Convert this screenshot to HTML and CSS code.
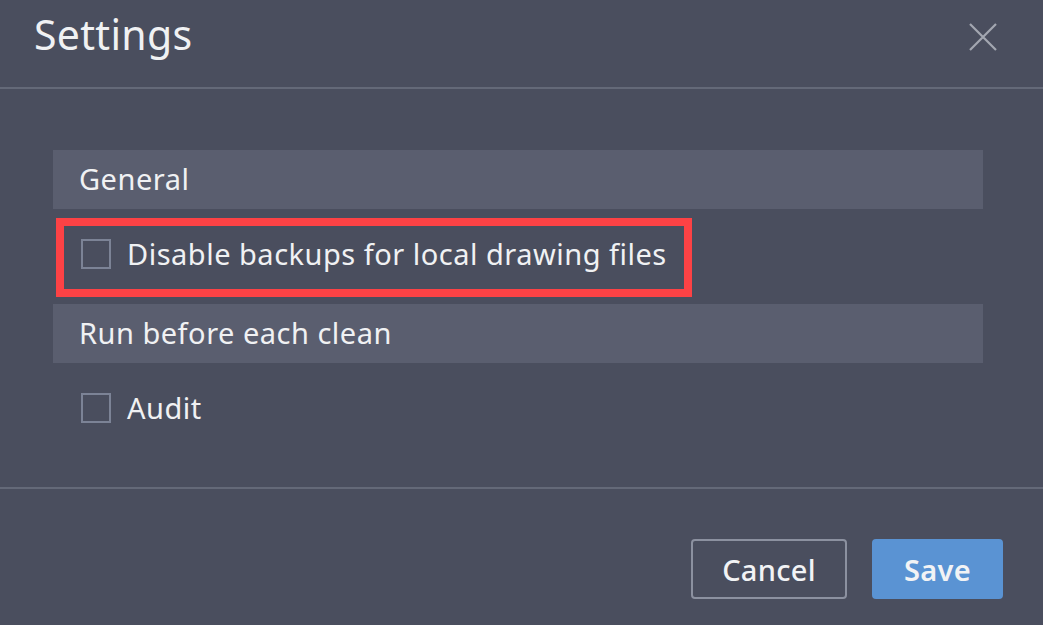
FILE: index.html
```html
<!DOCTYPE html>
<html lang="en">
<head>
<meta charset="utf-8">
<title>Settings</title>
<link rel="stylesheet" href="styles.css">
</head>
<body>
<div class="dialog">
  <header class="dialog-header">
    <h1 class="dialog-title">Settings</h1>
    <button class="close-btn" aria-label="Close">
      <svg width="28" height="28" viewBox="0 0 28 28"><path d="M1 1 L27 27 M27 1 L1 27" stroke="#a3a7b1" stroke-width="2.2" fill="none"/></svg>
    </button>
  </header>
  <main class="dialog-body">
    <div class="section-bar">General</div>
    <div class="option-row">
      <span class="checkbox"></span>
      <span class="option-label">Disable backups for local drawing files</span>
      <div class="highlight"></div>
    </div>
    <div class="section-bar">Run before each clean</div>
    <div class="option-row option-last">
      <span class="checkbox"></span>
      <span class="option-label">Audit</span>
    </div>
  </main>
  <footer class="dialog-footer">
    <button class="btn btn-cancel">Cancel</button>
    <button class="btn btn-save">Save</button>
  </footer>
</div>
</body>
</html>
```
FILE: styles.css
```css
html, body {
  margin: 0;
  padding: 0;
  background: #4a4e5e;
  font-family: "Noto Sans", "Open Sans", sans-serif;
  color: #f0f1f3;
}
.dialog {
  width: 1043px;
  height: 625px;
  overflow: hidden;
}
.dialog-header {
  height: 87px;
  display: flex;
  align-items: flex-start;
  justify-content: space-between;
  padding: 0 46px 0 34px;
  border-bottom: 2px solid #646978;
}
.dialog-title {
  margin: 0;
  margin-top: 10px;
  font-size: 41px;
  font-weight: 400;
  line-height: 48px;
  letter-spacing: 0.3px;
}
.close-btn {
  margin-top: 23px;
  background: none;
  border: none;
  padding: 0;
  width: 28px;
  height: 28px;
  cursor: pointer;
}
.close-btn svg { display: block; }
.dialog-body {
  padding: 61px 60px 0 53px;
  height: 337px;
  border-bottom: 2px solid #646978;
}
.section-bar {
  height: 59px;
  background: #5a5e6f;
  display: flex;
  align-items: center;
  padding-left: 26px;
  padding-bottom: 2px;
  box-sizing: border-box;
  font-size: 29px;
  letter-spacing: 0.5px;
}
.option-row {
  position: relative;
  display: flex;
  align-items: center;
  gap: 16px;
  padding: 30px 0 35px 28px;
  font-size: 29px;
  letter-spacing: 0.5px;
}
.checkbox {
  width: 26px;
  height: 26px;
  border: 2px solid #7c8396;
  flex: none;
}
.option-label {
  line-height: 30px;
}
.highlight {
  position: absolute;
  left: 3px;
  top: 9px;
  width: 636px;
  height: 79px;
  box-sizing: border-box;
  border: 8px solid #fd4245;
  pointer-events: none;
}
.dialog-footer {
  display: flex;
  justify-content: flex-end;
  gap: 25px;
  padding: 50px 40px 0 0;
}
.btn {
  height: 60px;
  font-family: "Noto Sans", "Open Sans", sans-serif;
  font-size: 29px;
  font-weight: 500;
  letter-spacing: 0.3px;
  color: #f2f3f5;
  border-radius: 4px;
  cursor: pointer;
}
.btn-cancel {
  width: 156px;
  background: transparent;
  border: 2px solid #8c91a0;
}
.btn-save {
  width: 131px;
  background: #5a93d3;
  border: none;
  font-weight: 600;
}
```
